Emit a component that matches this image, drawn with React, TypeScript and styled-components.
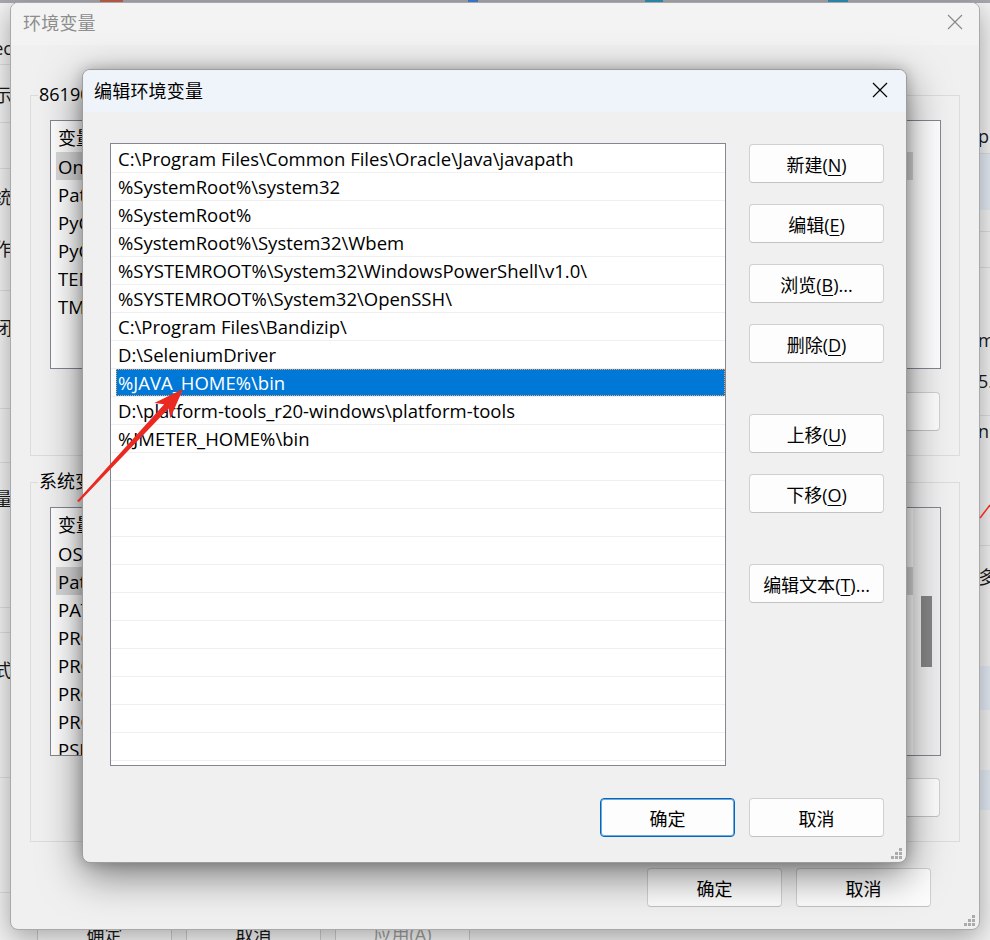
import React from "react";
import styled, { createGlobalStyle } from "styled-components";

const UI_FONT = `"Open Sans", "Noto Sans CJK SC", sans-serif`;

const GlobalStyle = createGlobalStyle`
  html, body { margin: 0; padding: 0; }
  body { background: #f3f3f3; font-family: ${UI_FONT}; overflow: hidden; }
  * { box-sizing: border-box; }
`;

const Desktop = styled.div`
  position: relative;
  width: 990px;
  height: 940px;
  overflow: hidden;
  background: #f3f3f3;
  font-family: ${UI_FONT};
`;

/* ---------- window behind everything ---------- */
const BackWindow = styled.div`
  position: absolute;
  inset: 0;
  display: grid;
  grid-template-columns: 14px 1fr 14px;
  grid-template-rows: 3px 910px 1fr;
  background: #f3f3f3;
`;

const TopStrip = styled.div`
  grid-column: 1 / 4;
  display: flex;
  background: #a7a7ae;
`;

const StripBlob = styled.div<{ $w: number; $c: string }>`
  width: ${(p) => p.$w}px;
  background: ${(p) => p.$c};
`;

const StripGap = styled.div<{ $w: number }>`
  width: ${(p) => p.$w}px;
`;

const SidePane = styled.div<{ $side: "left" | "right" }>`
  display: flex;
  flex-direction: column;
  align-items: ${(p) => (p.$side === "left" ? "flex-end" : "flex-start")};
  overflow: hidden;
  background: #f3f3f3;
`;

const SideItem = styled.div<{ $h: number; $line?: boolean; $tint?: string }>`
  flex: none;
  height: ${(p) => p.$h}px;
  width: 100%;
  display: flex;
  align-items: center;
  justify-content: inherit;
  white-space: nowrap;
  font-size: 18px;
  color: #1a1a1a;
  background: ${(p) => p.$tint || "transparent"};
  border-bottom: ${(p) => (p.$line ? "1px solid #dedede" : "none")};
`;

const SideText = styled.span<{ $side: "left" | "right" }>`
  margin-left: ${(p) => (p.$side === "left" ? "-40px" : "2px")};
  width: ${(p) => (p.$side === "left" ? "52px" : "auto")};
  text-align: ${(p) => (p.$side === "left" ? "right" : "left")};
`;

const BackFooter = styled.div`
  grid-column: 1 / 4;
  display: flex;
  gap: 14px;
  padding-left: 37px;
`;

const BackButton = styled.div<{ $disabled?: boolean }>`
  width: 135px;
  height: 39px;
  border: 1px solid #cfcfcf;
  border-radius: 4px;
  background: #fbfbfb;
  display: flex;
  align-items: center;
  justify-content: center;
  font-size: 18px;
  color: ${(p) => (p.$disabled ? "#a0a0a0" : "#1a1a1a")};
`;

/* ---------- outer dialog ---------- */
const OuterDialog = styled.section`
  position: absolute;
  left: 10px;
  top: 2px;
  width: 970px;
  height: 928px;
  border: 1px solid #a9a9a9;
  border-radius: 8px;
  overflow: hidden;
  background: #f0f0f0;
  box-shadow: 0 8px 28px rgba(0, 0, 0, 0.34);
  display: flex;
  flex-direction: column;
`;

const TitleBar = styled.div<{ $active?: boolean }>`
  flex: none;
  height: 42px;
  display: flex;
  align-items: center;
  justify-content: space-between;
  padding: 0 ${(p) => (p.$active ? "18px" : "16px")} ${(p) => (p.$active ? "3px" : "4px")}
    ${(p) => (p.$active ? "11px" : "12px")};
  background: ${(p) => (p.$active ? "#eef4f9" : "#f3f3f3")};
`;

const TitleText = styled.div<{ $active?: boolean }>`
  font-size: 18px;
  color: ${(p) => (p.$active ? "#000" : "#8d8d8d")};
  letter-spacing: 0.2px;
`;

const OuterBody = styled.div`
  flex: 1;
  display: flex;
  flex-direction: column;
  padding: 50px 19px 0 19px;
`;

const GroupBox = styled.div<{ $h: number; $mt?: number }>`
  position: relative;
  flex: none;
  height: ${(p) => p.$h}px;
  margin-top: ${(p) => p.$mt || 0}px;
  border: 1px solid #dcdcdc;
  padding: 24px 18px 0 19px;
  display: flex;
  flex-direction: column;
`;

const GroupLegend = styled.div`
  position: absolute;
  top: -14px;
  left: 7px;
  padding: 0 1px;
  background: #f0f0f0;
  font-size: 18px;
  line-height: 24px;
  color: #000;
  white-space: nowrap;
`;

const VarList = styled.div`
  flex: none;
  width: 891px;
  height: 249px;
  border: 1px solid #828790;
  background: #fff;
  display: flex;
  overflow: hidden;
`;

const VarColumn = styled.div`
  flex: 1;
  display: flex;
  flex-direction: column;
  overflow: hidden;
`;

const VarHeader = styled.div`
  flex: none;
  height: 31px;
  display: flex;
  align-items: center;
  font-size: 18px;
  color: #000;
`;

const HeaderCell = styled.div<{ $w: number }>`
  flex: none;
  width: ${(p) => p.$w}px;
  padding-left: 7px;
  border-right: 1px solid #e5e5e5;
  height: 100%;
  display: flex;
  align-items: center;
`;

const VarRow = styled.div`
  flex: none;
  height: 28px;
  padding: 0 0 0 5px;
  display: flex;
`;

const VarCell = styled.div<{ $active?: boolean }>`
  flex: 1;
  display: flex;
  align-items: center;
  padding-left: 2px;
  font-size: 18.5px;
  color: #000;
  white-space: nowrap;
  background: ${(p) => (p.$active ? "#d9d9d9" : "transparent")};
`;

const VarName = styled.span`
  width: 250px;
  overflow: hidden;
`;

const ScrollTrack = styled.div<{ $blank?: boolean }>`
  flex: none;
  width: 27px;
  background: ${(p) => (p.$blank ? "#fff" : "#f0f0f0")};
  display: flex;
  justify-content: center;
  padding-top: 88px;
`;

const ScrollThumb = styled.div`
  width: 11px;
  height: 71px;
  background: #858585;
`;

const ButtonRow = styled.div<{ $mt: number; $pr?: number }>`
  display: flex;
  justify-content: flex-end;
  gap: 14px;
  margin-top: ${(p) => p.$mt}px;
  padding-right: ${(p) => p.$pr || 0}px;
`;

const Btn = styled.div<{ $primary?: boolean; $mt?: number }>`
  flex: none;
  width: 135px;
  height: 39px;
  margin-top: ${(p) => p.$mt || 0}px;
  border: 1px solid ${(p) => (p.$primary ? "#0067c0" : "#d0d0d0")};
  border-bottom-color: ${(p) => (p.$primary ? "#0067c0" : "#c2c2c2")};
  box-shadow: ${(p) => (p.$primary ? "inset 0 0 0 1px rgba(0,103,192,0.55)" : "none")};
  border-radius: 4px;
  background: #fdfdfd;
  display: flex;
  align-items: center;
  justify-content: center;
  font-size: 18px;
  color: #000;
  white-space: nowrap;
  u {
    text-decoration-thickness: 1px;
    text-underline-offset: 3px;
  }
`;

const Grip = styled.svg<{ $r: number; $b: number }>`
  position: absolute;
  right: ${(p) => p.$r}px;
  bottom: ${(p) => p.$b}px;
`;

/* ---------- inner dialog ---------- */
const InnerDialog = styled.section`
  position: absolute;
  left: 82px;
  top: 69px;
  width: 825px;
  height: 794px;
  border: 1px solid #9d9d9d;
  border-radius: 8px;
  overflow: hidden;
  background: #f0f0f0;
  box-shadow: 0 12px 40px rgba(0, 0, 0, 0.5), 0 0 14px rgba(0, 0, 0, 0.22);
  display: flex;
  flex-direction: column;
`;

const InnerBody = styled.div`
  flex: 1;
  display: flex;
  flex-direction: column;
  padding: 31px 0 0 27px;
`;

const MainRow = styled.div`
  display: flex;
  gap: 23px;
`;

const PathList = styled.div`
  flex: none;
  width: 616px;
  height: 623px;
  border: 1px solid #828790;
  background: #fff;
  padding-top: 1px;
  display: flex;
  flex-direction: column;
  overflow: hidden;
`;

const PathRow = styled.div`
  flex: none;
  height: 28px;
  border-bottom: 1px solid #efefef;
  padding-left: 5px;
  display: flex;
`;

const PathCell = styled.div<{ $selected?: boolean }>`
  flex: 1;
  display: flex;
  align-items: center;
  padding-left: 2px;
  font-size: 18.5px;
  white-space: nowrap;
  background: ${(p) => (p.$selected ? "#0078d7" : "transparent")};
  color: ${(p) => (p.$selected ? "#fff" : "#000")};
  outline: ${(p) => (p.$selected ? "1px dotted #f4a460" : "none")};
  outline-offset: -1px;
`;

const SideButtons = styled.div`
  display: flex;
  flex-direction: column;
  gap: 21px;
  padding-top: 1px;
`;

const InnerFooter = styled.div`
  display: flex;
  justify-content: flex-end;
  gap: 14px;
  margin-top: 32px;
  padding-right: 22px;
`;

const Overlay = styled.svg`
  position: absolute;
  left: 0;
  top: 0;
  pointer-events: none;
`;

const CloseIcon = ({ color }: { color: string }) => (
  <svg width="16" height="16" viewBox="0 0 16 16">
    <path d="M1 1 L15 15 M15 1 L1 15" stroke={color} strokeWidth="1.2" fill="none" />
  </svg>
);

const GripIcon = ({ r, b }: { r: number; b: number }) => (
  <Grip $r={r} $b={b} width="12" height="12" viewBox="0 0 12 12">
    {[
      [8, 0],
      [8, 4],
      [4, 4],
      [8, 8],
      [4, 8],
      [0, 8],
    ].map(([x, y]) => (
      <rect key={`${x}-${y}`} x={x} y={y} width="3" height="3" fill="#ababab" />
    ))}
  </Grip>
);

const leftItems: { h: number; t?: string; line?: boolean }[] = [
  { h: 28 },
  { h: 34, t: "Spec", line: true },
  { h: 58, t: "显示", line: true },
  { h: 46, line: true },
  { h: 54, t: "系统" },
  { h: 50, t: "工作" },
  { h: 18, line: true },
  { h: 72, t: "关闭" },
  { h: 46, line: true },
  { h: 54, line: true },
  { h: 70, t: "变量" },
  { h: 75, line: true },
  { h: 25, line: true },
  { h: 72, t: "模式" },
  { h: 73, line: true },
  { h: 115, line: true },
];

const rightItems: { h: number; t?: string; line?: boolean; tint?: string }[] = [
  { h: 115 },
  { h: 36, t: "pDa", line: true },
  { h: 56, tint: "#e4ecf5" },
  { h: 22, line: true },
  { h: 36, line: true },
  { h: 56 },
  { h: 32, t: "m3" },
  { h: 10 },
  { h: 30, t: "5.4" },
  { h: 20, line: true },
  { h: 30, t: "nn" },
  { h: 100, line: true },
  { h: 60, t: "多" },
  { h: 60 },
  { h: 44, tint: "#e4ecf5" },
  { h: 60 },
  { h: 40, tint: "#e4ecf5" },
];

const paths = [
  "C:\\Program Files\\Common Files\\Oracle\\Java\\javapath",
  "%SystemRoot%\\system32",
  "%SystemRoot%",
  "%SystemRoot%\\System32\\Wbem",
  "%SYSTEMROOT%\\System32\\WindowsPowerShell\\v1.0\\",
  "%SYSTEMROOT%\\System32\\OpenSSH\\",
  "C:\\Program Files\\Bandizip\\",
  "D:\\SeleniumDriver",
  "%JAVA_HOME%\\bin",
  "D:\\platform-tools_r20-windows\\platform-tools",
  "%JMETER_HOME%\\bin",
];
const SELECTED = 8;
const TOTAL_ROWS = 23;

const userVars = ["OneDrive", "Path", "PyCharm", "PyCharm Community Edition", "TEMP", "TMP", ""];
const sysVars = [
  "OS",
  "Path",
  "PATHEXT",
  "PROCESSOR_ARCHITECTURE",
  "PROCESSOR_IDENTIFIER",
  "PROCESSOR_LEVEL",
  "PROCESSOR_REVISION",
  "PSModulePath",
];

const Label = ({ text, u, tail = "" }: { text: string; u: string; tail?: string }) => (
  <span>
    {text}(<u>{u}</u>){tail}
  </span>
);

export default function App() {
  return (
    <>
      <GlobalStyle />
      <Desktop>
        <BackWindow>
          <TopStrip>
            <StripGap $w={100} />
            <StripBlob $w={23} $c="#c0604f" />
            <StripGap $w={345} />
            <StripBlob $w={10} $c="#3d7fd9" />
            <StripGap $w={167} />
            <StripBlob $w={18} $c="#2f8fb5" />
            <StripGap $w={165} />
            <StripBlob $w={20} $c="#2f8fb5" />
          </TopStrip>
          <SidePane $side="left">
            {leftItems.map((it, i) => (
              <SideItem key={i} $h={it.h} $line={it.line}>
                {it.t && <SideText $side="left">{it.t}</SideText>}
              </SideItem>
            ))}
          </SidePane>
          <div />
          <SidePane $side="right">
            {rightItems.map((it, i) => (
              <SideItem key={i} $h={it.h} $line={it.line} $tint={it.tint}>
                {it.t && <SideText $side="right">{it.t}</SideText>}
              </SideItem>
            ))}
          </SidePane>
          <BackFooter>
            <BackButton>确定</BackButton>
            <BackButton>取消</BackButton>
            <BackButton $disabled>应用(A)</BackButton>
          </BackFooter>
        </BackWindow>

        <OuterDialog>
          <TitleBar>
            <TitleText>环境变量</TitleText>
            <CloseIcon color="#8a8a8a" />
          </TitleBar>
          <OuterBody>
            <GroupBox $h={361}>
              <GroupLegend>
                86190 的用户变量(<u>U</u>)
              </GroupLegend>
              <VarList>
                <VarColumn>
                  <VarHeader>
                    <HeaderCell $w={250}>变量</HeaderCell>
                    <HeaderCell $w={600}>值</HeaderCell>
                  </VarHeader>
                  {userVars.map((v, i) => (
                    <VarRow key={i}>
                      <VarCell $active={i === 0}>
                        <VarName>{v}</VarName>
                      </VarCell>
                    </VarRow>
                  ))}
                </VarColumn>
                <ScrollTrack $blank />
              </VarList>
              <ButtonRow $mt={23} $pr={1}>
                <Btn>
                  <Label text="新建" u="N" tail="..." />
                </Btn>
                <Btn>
                  <Label text="编辑" u="E" tail="..." />
                </Btn>
                <Btn>
                  <Label text="删除" u="D" />
                </Btn>
              </ButtonRow>
            </GroupBox>

            <GroupBox $h={360} $mt={26}>
              <GroupLegend>
                系统变量(<u>S</u>)
              </GroupLegend>
              <VarList>
                <VarColumn>
                  <VarHeader>
                    <HeaderCell $w={250}>变量</HeaderCell>
                    <HeaderCell $w={600}>值</HeaderCell>
                  </VarHeader>
                  {sysVars.map((v, i) => (
                    <VarRow key={i}>
                      <VarCell $active={i === 1}>
                        <VarName>{v}</VarName>
                      </VarCell>
                    </VarRow>
                  ))}
                </VarColumn>
                <ScrollTrack>
                  <ScrollThumb />
                </ScrollTrack>
              </VarList>
              <ButtonRow $mt={22} $pr={1}>
                <Btn>
                  <Label text="新建" u="W" tail="..." />
                </Btn>
                <Btn>
                  <Label text="编辑" u="I" tail="..." />
                </Btn>
                <Btn>
                  <Label text="删除" u="L" />
                </Btn>
              </ButtonRow>
            </GroupBox>

            <ButtonRow $mt={26} $pr={29}>
              <Btn>确定</Btn>
              <Btn>取消</Btn>
            </ButtonRow>
          </OuterBody>
          <GripIcon r={3} b={2} />
        </OuterDialog>

        <InnerDialog>
          <TitleBar $active>
            <TitleText $active>编辑环境变量</TitleText>
            <CloseIcon color="#000" />
          </TitleBar>
          <InnerBody>
            <MainRow>
              <PathList>
                {Array.from({ length: TOTAL_ROWS }).map((_, i) => (
                  <PathRow key={i}>
                    <PathCell $selected={i === SELECTED}>{paths[i] || ""}</PathCell>
                  </PathRow>
                ))}
              </PathList>
              <SideButtons>
                <Btn>
                  <Label text="新建" u="N" />
                </Btn>
                <Btn>
                  <Label text="编辑" u="E" />
                </Btn>
                <Btn>
                  <Label text="浏览" u="B" tail="..." />
                </Btn>
                <Btn>
                  <Label text="删除" u="D" />
                </Btn>
                <Btn $mt={30}>
                  <Label text="上移" u="U" />
                </Btn>
                <Btn>
                  <Label text="下移" u="O" />
                </Btn>
                <Btn $mt={30}>
                  <Label text="编辑文本" u="T" tail="..." />
                </Btn>
              </SideButtons>
            </MainRow>
            <InnerFooter>
              <Btn $primary>确定</Btn>
              <Btn>取消</Btn>
            </InnerFooter>
          </InnerBody>
          <GripIcon r={3} b={2} />
        </InnerDialog>

        <Overlay width="990" height="940" viewBox="0 0 990 940">
          <polygon
            points="77,501 79,502 168.6,408.5 170.3,418.3 183,389 154.3,403.1 164.2,404.3"
            fill="#ea2a20"
          />
          <line x1="980" y1="518" x2="990" y2="505" stroke="#ea2a20" strokeWidth="1.5" />
        </Overlay>
      </Desktop>
    </>
  );
}
